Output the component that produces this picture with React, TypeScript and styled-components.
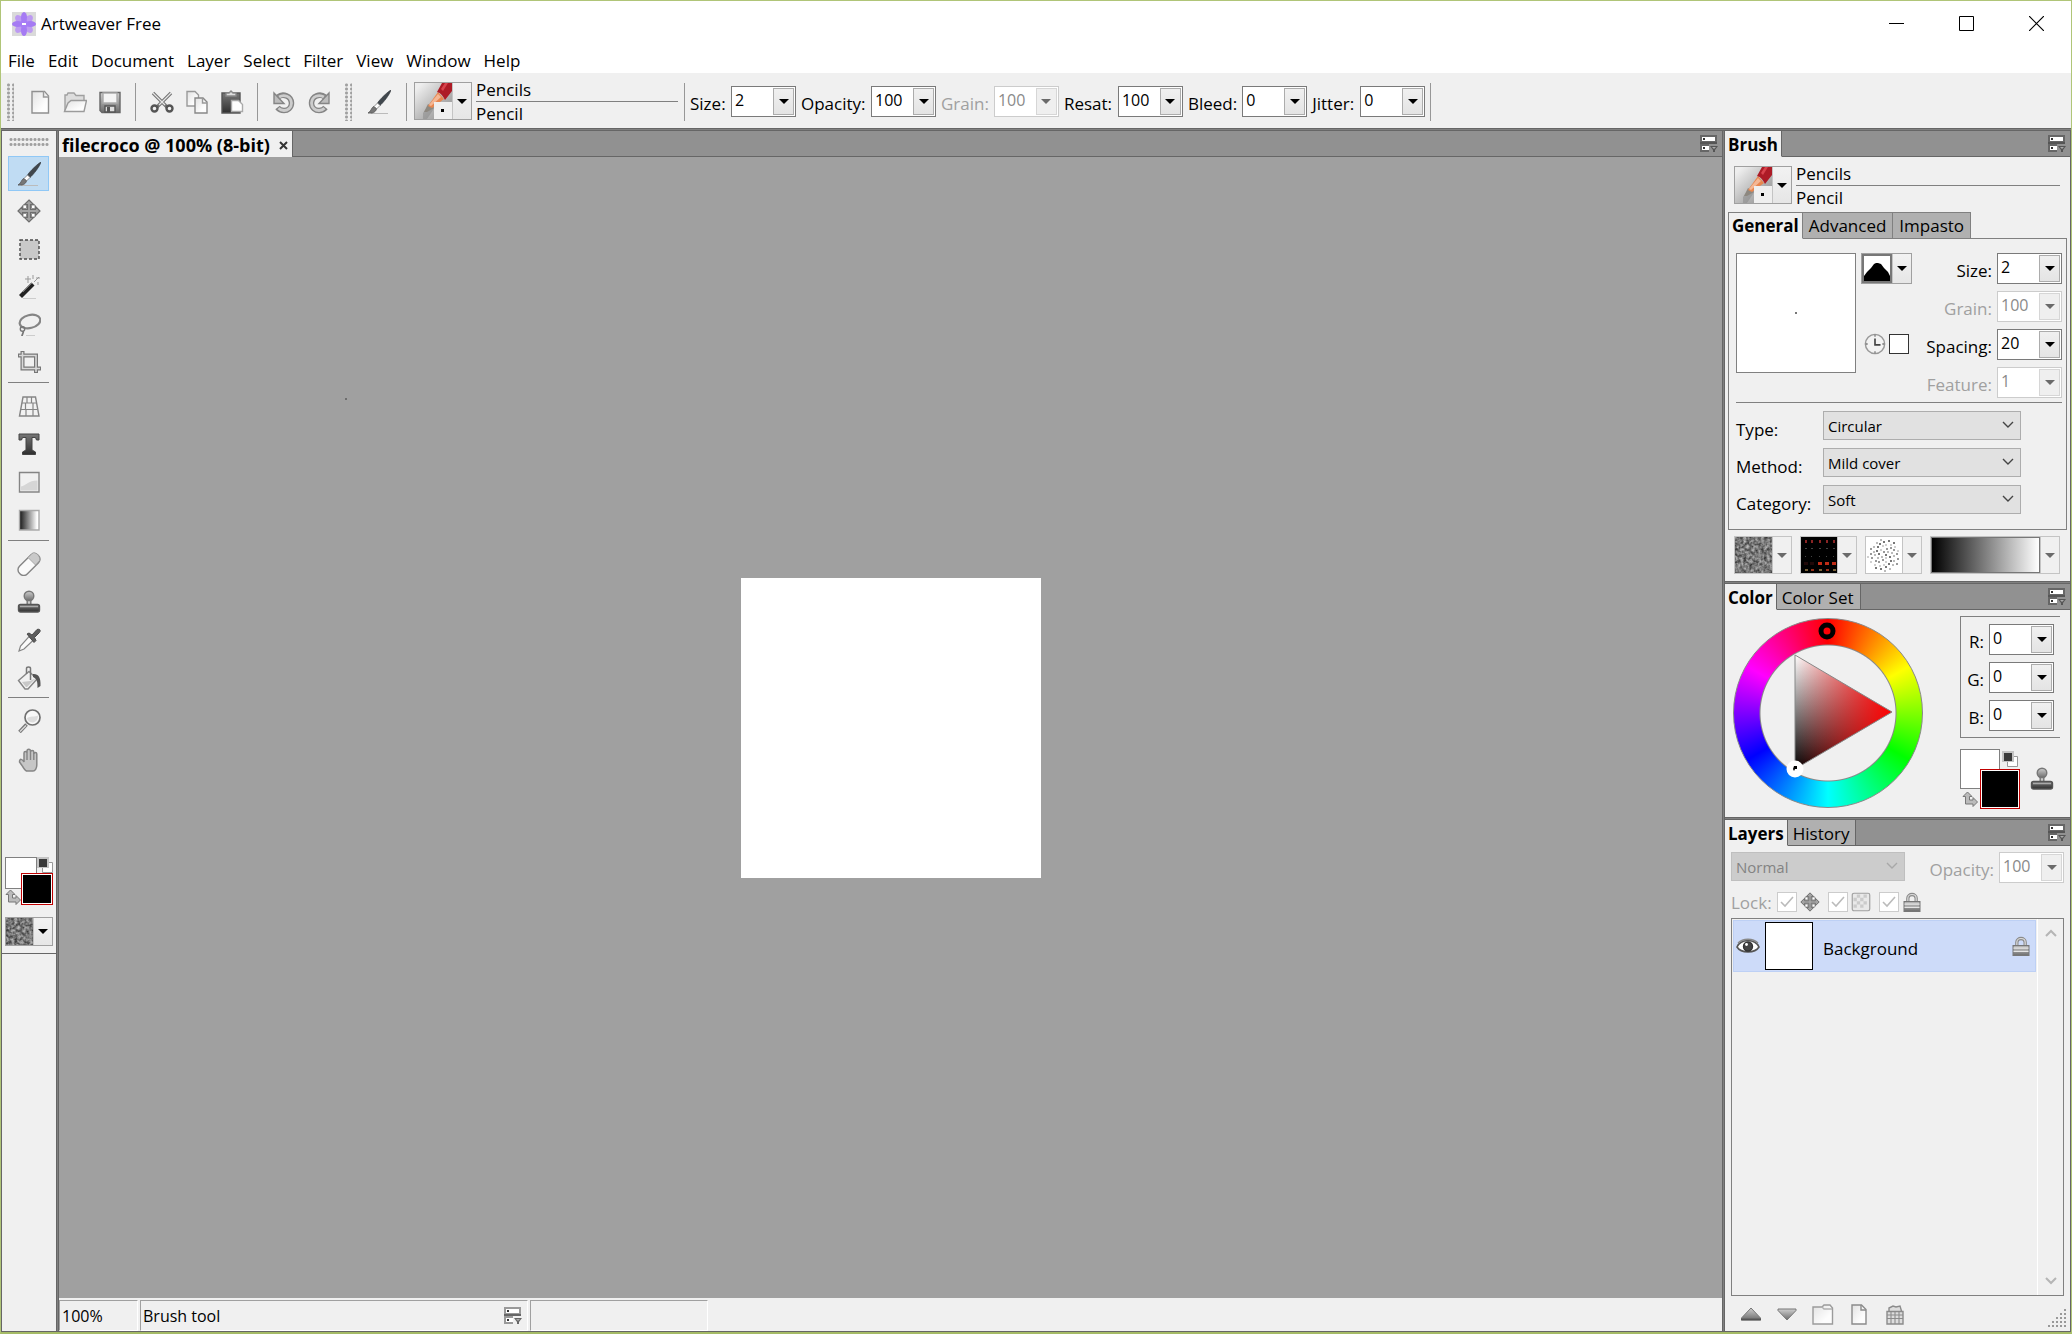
import React, { useId } from 'react';
import styled, { createGlobalStyle, css } from 'styled-components';

const color = {
  face: '#f0f0f0',
  canvas: '#a0a0a0',
  bar: '#919191',
  tab: '#b0b0b0',
  edge: '#666666',
  line: '#808080',
  soft: '#adadad',
  dim: '#a0a0a0',
};

const GlobalStyle = createGlobalStyle`
  *, *::before, *::after { box-sizing: border-box; }
  body { margin: 0; }
  body, button, input, select {
    font-family: 'Open Sans', 'Noto Sans', sans-serif;
    font-size: 17px;
    line-height: 24px;
    color: #000;
  }
  button { padding: 0; border: 0; background: none; }
  svg { display: block; }
`;

/* ---------- frame ---------- */

const Window = styled.div`
  display: flex;
  flex-direction: column;
  height: 100vh;
  min-height: 1000px;
  background: ${color.face};
  border: 1px solid #b0c578;
  border-bottom-width: 2px;
  border-bottom-color: #a5bb66;
`;

const TitleBar = styled.header`
  display: flex;
  align-items: center;
  height: 47px;
  padding: 0 0 2px 11px;
  background: #fff;
`;

const Title = styled.h1`
  margin: 0;
  padding-left: 5px;
  flex: 1;
  font-size: 17px;
  font-weight: 400;
`;

const WindowButton = styled.button`
  width: 70px;
  height: 44px;
  display: grid;
  place-items: center;
`;

const MenuBar = styled.nav`
  display: flex;
  align-items: center;
  height: 25px;
  padding-left: 7px;
  gap: 13px;
  background: #fff;
`;

const MenuItem = styled.button`
  white-space: nowrap;
`;

const ToolBar = styled.div`
  display: flex;
  align-items: center;
  height: 55px;
  padding: 2px 5px 0;
`;

const GripV = styled.div`
  width: 8px;
  height: 38px;
  background: radial-gradient(circle, #a0a0a0 1px, transparent 2px) 0 0 / 5px 4px;
`;

const GripH = styled.div`
  height: 9px;
  margin: 0 7px;
  background: radial-gradient(circle, #a0a0a0 1px, transparent 2px) 0 0 / 4px 5px;
`;

const Separator = styled.div`
  width: 1px;
  height: 38px;
  background: #979797;
`;

const IconGroup = styled.div<{ $pad?: string }>`
  display: flex;
  gap: 11px;
  padding: ${(p) => p.$pad ?? '0 13px 0 14px'};
`;

const IconButton = styled.button`
  width: 24px;
  height: 26px;
  display: grid;
  place-items: center;
`;

const Body = styled.div`
  flex: 1;
  min-height: 0;
  display: flex;
  border: solid ${color.edge};
  border-width: 0 1px 1px;
`;

const DividerH = styled.div`
  flex: none;
  height: 3px;
  background: ${color.line};
  border: solid ${color.edge};
  border-width: 1px 0;
`;

const DividerV = styled.div`
  flex: none;
  width: 3px;
  background: ${color.line};
  border: solid ${color.edge};
  border-width: 0 1px;
`;

/* ---------- shared controls ---------- */

const NumberBox = styled.span<{ $off?: boolean }>`
  display: flex;
  width: 65px;
  height: 31px;
  padding: 1px;
  background: #fff;
  border: 1px solid ${(p) => (p.$off ? '#cccccc' : '#7a7a7a')};
`;

const NumberInput = styled.input`
  flex: 1;
  min-width: 0;
  width: 0;
  border: 0;
  outline: 0;
  padding: 0 0 3px 2px;
  font-size: 16px;
  background: transparent;
  &:disabled { color: #8a8a8a; }
`;

const DropButton = styled.button<{ $faint?: boolean }>`
  width: 21px;
  display: grid;
  place-items: center;
  border: 1px solid ${(p) => (p.$faint ? '#d6d6d6' : '#acacac')};
  background: ${(p) => (p.$faint ? '#efefef' : 'linear-gradient(#f0f0f0, #e4e4e4)')};
`;

const Arrow = styled.i<{ $grey?: boolean }>`
  border: solid transparent;
  border-width: 5px 5px 0;
  border-top-color: ${(p) => (p.$grey ? '#6a6a6a' : '#000')};
`;

const Label = styled.label<{ $off?: boolean; $w?: number }>`
  white-space: nowrap;
  padding-top: 4px;
  color: ${(p) => (p.$off ? color.dim : '#000')};
  ${(p) => p.$w && css`min-width: ${p.$w}px;`}
`;

const ChoiceLabel = styled.label`
  line-height: 20px;
  padding-top: 9px;
`;

const FieldRow = styled.div`
  display: flex;
  align-items: center;
  justify-content: flex-end;
  gap: 5px;
`;

function NumberField(p: { label: string; value: string; off?: boolean; w?: number }) {
  const id = useId();
  return (
    <FieldRow>
      <Label htmlFor={id} $off={p.off} $w={p.w}>{p.label}</Label>
      <NumberBox $off={p.off}>
        <NumberInput id={id} defaultValue={p.value} disabled={p.off} />
        <DropButton $faint={p.off} disabled={p.off} aria-label={`${p.label} slider`}>
          <Arrow $grey={p.off} />
        </DropButton>
      </NumberBox>
    </FieldRow>
  );
}

const SelectWrap = styled.span<{ $off?: boolean }>`
  position: relative;
  display: block;
  width: ${(p) => (p.$off ? 174 : 198)}px;
  color: ${(p) => (p.$off ? '#a8a8a8' : '#444')};
  svg {
    position: absolute;
    right: 7px;
    top: 10px;
    pointer-events: none;
  }
`;

const Select = styled.select`
  appearance: none;
  width: 100%;
  height: 29px;
  padding: 0 24px 0 4px;
  font-size: 15px;
  line-height: 20px;
  border: 1px solid ${color.soft};
  border-radius: 0;
  background: #e1e1e1;
  &:disabled {
    background: #cccccc;
    border-color: #bfbfbf;
    color: #838383;
    opacity: 1;
  }
`;

function Choice(p: { id: string; value: string; off?: boolean; label?: string }) {
  return (
    <SelectWrap $off={p.off}>
      <Select id={p.id} disabled={p.off} aria-label={p.label}>
        <option>{p.value}</option>
      </Select>
      <svg width="12" height="8" viewBox="0 0 12 8" fill="none" stroke="currentColor" strokeWidth="1.4">
        <path d="M1 1l5 5 5-5" />
      </svg>
    </SelectWrap>
  );
}

const Picker = styled.button<{ $h?: number; $faint?: boolean; $grow?: boolean }>`
  display: flex;
  height: ${(p) => p.$h ?? 38}px;
  ${(p) => p.$grow && 'flex: 1;'}
  border: 1px solid ${(p) => (p.$faint ? '#c4c4c4' : '#a0a0a0')};
  background: ${(p) => (p.$faint ? '#f0f0f0' : 'linear-gradient(#f2f2f2, #e6e6e6)')};
`;

const PickerArrow = styled.span`
  width: 19px;
  height: 100%;
  display: grid;
  place-items: center;
  border-left: 1px solid #c4c4c4;
`;

const Gradient = styled.span`
  flex: 1;
  height: 100%;
  border: 1px solid #777;
  background: linear-gradient(90deg, #000, #fff);
`;

/* ---------- brush identity ---------- */

const BrushInfo = styled.div`
  display: flex;
  gap: 4px;
`;

const BrushNames = styled.div<{ $w?: number }>`
  ${(p) => (p.$w ? `width: ${p.$w}px;` : 'flex: 1;')}
  line-height: 23px;
  margin: -4px 0;
`;

const BrushCategory = styled.div`
  border-bottom: 1px solid ${color.line};
`;

const PencilArt = () => {
  const id = useId();
  return (
    <svg width="37" height="36" viewBox="0 0 37 36">
      <defs>
        <linearGradient id={id} x1="0" y1="0" x2="1" y2="1">
          <stop offset="0.1" stopColor="#eeeeee" />
          <stop offset="0.6" stopColor="#b4b4b4" />
          <stop offset="1" stopColor="#8c8c8c" />
        </linearGradient>
      </defs>
      <path fill={`url(#${id})`} d="M0 0h37v36H0z" />
      <path fill="#858585" opacity=".5" d="M8 30l8-11 8-4-6 12-6 9H8z" />
      <path fill="#8d8880" d="M9 29l4-8 6 4-7 4z" />
      <path fill="#e8864f" d="M13 23l10-14 6 7-12 9z" />
      <path fill="#f4b795" d="M14 22l9-11 3 3-10 9z" />
      <path fill="#ad1b26" d="M22 9l5-9h10v8l-7 9c-2-4-4-7-8-8z" />
      <path fill="#d8434c" d="M26 6l4-6h3l-5 8z" />
      <path fill="#efefef" d="M19 19h18v17H19z" />
      <path d="M26 26h3v3h-3z" />
    </svg>
  );
};

function Brush({ nameWidth }: { nameWidth?: number }) {
  return (
    <BrushInfo>
      <Picker aria-label="Choose brush">
        <PencilArt />
        <PickerArrow><Arrow /></PickerArrow>
      </Picker>
      <BrushNames $w={nameWidth}>
        <BrushCategory>Pencils</BrushCategory>
        <div>Pencil</div>
      </BrushNames>
    </BrushInfo>
  );
}

/* ---------- icons ---------- */

type IconProps = { children: React.ReactNode; size?: number };
const Icon = ({ children, size = 24 }: IconProps) => (
  <svg width={size} height={size} viewBox="0 0 24 24" fill="none" stroke="#777" strokeWidth="1.4">
    {children}
  </svg>
);

const DefsSvg = styled.svg`
  position: absolute;
`;

const IconDefs = () => (
  <DefsSvg width="0" height="0" aria-hidden="true">
    <defs>
      <linearGradient id="paper" x1="0" y1="0" x2="1" y2="1">
        <stop offset="0" stopColor="#e2e2e2" /><stop offset=".7" stopColor="#fdfdfd" />
      </linearGradient>
      <linearGradient id="metal" x1="0" y1="0" x2="0" y2="1">
        <stop offset="0" stopColor="#cfcfcf" /><stop offset="1" stopColor="#6c6c6c" />
      </linearGradient>
      <linearGradient id="dark" x1="0" y1="0" x2="0" y2="1">
        <stop offset="0" stopColor="#777" /><stop offset="1" stopColor="#2f2f2f" />
      </linearGradient>
      <linearGradient id="ramp">
        <stop offset="0" stopColor="#161616" /><stop offset=".9" stopColor="#fff" />
      </linearGradient>
      <filter id="noise" x="0" y="0" width="100%" height="100%" colorInterpolationFilters="sRGB">
        <feTurbulence type="fractalNoise" baseFrequency="0.34" numOctaves="2" seed="4" />
        <feColorMatrix values="0.8 0 0 0 0.07  0.8 0 0 0 0.07  0.8 0 0 0 0.07  0 0 0 0 1" />
      </filter>
    </defs>
  </DefsSvg>
);

const turnPath = (
  <>
    <path stroke="#858585" strokeWidth="5.5" d="M6 7c5-4 13-1 13.500 6 0 5-4 7.500-7.500 7.500-3 0-5-1-6.500-3" />
    <path stroke="#cdcdcd" strokeWidth="2.8" d="M7 7c5-3 12-1 12.500 6 0 5-4 7.500-7.500 7.500-2 0-4-.7-5.500-2.200" />
    <path fill="#bdbdbd" stroke="#858585" d="M2 3v10.500h10z" />
  </>
);

const NewIcon = () => <Icon><path fill="url(#paper)" stroke="#8f8f8f" d="M4 1.500h12.500l4 4.500V23H4z" /><path stroke="#999" fill="#eee" d="M15.500 1.500V7h5" /></Icon>;
const OpenIcon = () => <Icon><path fill="#ddd" stroke="#a0a0a0" d="M2 21V5h2l1-2h6l2 2.500h8V10" /><path fill="url(#paper)" stroke="#9b9b9b" d="M1.500 21.500L5 13l3-2.500h15.500L21 21.500z" /></Icon>;
const SaveIcon = () => <Icon><path fill="url(#metal)" stroke="#666" d="M2 2.500h20v20H4l-2-2z" /><path fill="#f4f4f4" stroke="#aaa" d="M5 3h14v10H5z" /><path fill="#ddd" stroke="#555" d="M7 16h10v6H7z" /><path fill="#555" stroke="none" d="M9 17h3v5H9z" /></Icon>;
const CutIcon = () => <Icon><path stroke="#777" strokeWidth="3.4" d="M3 3l14 14M21 3L7 17" /><path stroke="#e6e6e6" strokeWidth="1.2" d="M3 3l12 12M21 3L9 15" /><ellipse cx="4.500" cy="18.500" rx="3" ry="3" stroke="#555" strokeWidth="2.4" /><ellipse cx="19.500" cy="18.500" rx="3" ry="3" stroke="#555" strokeWidth="2.4" /></Icon>;
const CopyIcon = () => <Icon><path fill="url(#paper)" stroke="#999" d="M2 1.500h8l3.500 3.500v11H2z" /><path fill="url(#paper)" stroke="#888" d="M10 8h8l4 4v11H10z" /><path stroke="#999" d="M17.500 8v5H22" /></Icon>;
const PasteIcon = () => <Icon><path fill="url(#dark)" stroke="#555" d="M2 3h18v20H2z" /><path fill="#ddd" stroke="#888" d="M6 6V3h3l2-2 2 2h3v3z" /><path fill="#fff" stroke="#aaa" d="M11.500 10.500h7l4 4v7h-11z" /></Icon>;
const UndoIcon = () => <Icon>{turnPath}</Icon>;
const RedoIcon = () => <Icon><g transform="matrix(-1 0 0 1 24 0)">{turnPath}</g></Icon>;
const BrushIcon = () => <Icon><path stroke="#bbb" strokeWidth="1" d="M4 23.500h17" /><path fill="#40474d" stroke="#30363b" strokeWidth=".6" d="M24 0c-3 1.500-11 9-13.500 13l2.500 2.500C16 13 22.500 5 24 0z" /><path fill="#fff" stroke="#777" strokeWidth=".8" d="M10.500 13L7 16.500 9.500 19l3.500-3.500z" /><path fill="#777" stroke="#555" strokeWidth=".8" d="M7 16.500c-3 1-2 4-6 6.500 4 .5 7.500-.5 8.500-4z" /></Icon>;
const MoveIcon = ({ size }: { size?: number }) => <Icon size={size}><path fill="#a4a4a4" stroke="#6e6e6e" strokeWidth="1.2" d="M12 1l4.500 4.500h-3v5h5v-3L23 12l-4.500 4.500v-3h-5v5h3L12 23l-4.500-4.500h3v-5h-5v3L1 12l4.500-4.500v3h5v-5h-3z" /><path fill="#fff" stroke="#777" strokeWidth=".8" d="M6 6h3.500v3.500H6zM14.500 6H18v3.500h-3.500zM6 14.500h3.500V18H6zM14.500 14.500H18V18h-3.500z" /></Icon>;
const MarqueeIcon = () => <Icon><path fill="#c9c9c9" stroke="#4a4a4a" strokeDasharray="3 2" d="M3 3h19v19H3z" /></Icon>;
const WandIcon = () => <Icon><path stroke="#222" strokeWidth="4.2" d="M3.500 21.500L16 9" /><path stroke="#777" strokeWidth="1" d="M6 17l9-9" /><path stroke="#999" strokeWidth="1" d="M17 7l5-5M11 1v7M8 4h6M19 3h4M21 7v3M16 0v4" /><path stroke="#ccc" strokeWidth="1" d="M6 23.500h13" /></Icon>;
const LassoIcon = () => <Icon><ellipse cx="13" cy="8.500" rx="10.500" ry="6.500" transform="rotate(-14 13 8.500)" stroke="#858585" strokeWidth="2.2" /><circle cx="5.500" cy="16" r="2.200" stroke="#777" /><path stroke="#777" strokeWidth="1.8" d="M6 18c1 2-1 3-1 5" /><path stroke="#ccc" strokeWidth="1" d="M9 22.500h9" /></Icon>;
const CropIcon = () => <Icon><path stroke="#777" strokeWidth="4" d="M5.500 1v17.500H24M1 5.500h18V23" /><path stroke="#d8d8d8" strokeWidth="1.6" d="M5.500 2v16.500H23M2 5.500h17V22" /></Icon>;
const MeshIcon = () => <Icon><path fill="#f2f2f2" stroke="#858585" d="M6 3h12.500l3.500 19H2.500z" /><path stroke="#858585" strokeWidth="1.2" d="M5 9h14.500M3.500 15.500h17M10 3v6M14.500 3v6M8.500 9v6.500M16 9v6.500M9 15.500V22M16 15.500V22" /></Icon>;
const TextIcon = () => <Icon><path fill="url(#dark)" stroke="#444" strokeWidth="1" d="M2 2h20v6h-2.500L18.500 5.500H15V18l3.500 2v2.500h-13V20L9 18V5.500H5.500L4.500 8H2z" /></Icon>;
const ShapeIcon = () => <Icon><path fill="#f1f1f1" stroke="#858585" d="M2.500 2.500h19.500V22H2.500z" /><path fill="#d6d6d6" stroke="none" d="M4 20.500v-4c5-1 7-6 16.500-6v10z" /></Icon>;
const GradIcon = () => <Icon><path fill="url(#ramp)" stroke="#aaa" d="M2.500 2.500h19.500V22H2.500z" /></Icon>;
const EraserIcon = () => <Icon><rect x="-1" y="7" width="26" height="11" rx="5" transform="rotate(-45 12 12.500)" fill="#fafafa" stroke="#858585" /><path fill="#c9c9c9" stroke="#999" strokeWidth=".8" d="M11 5.500l4-4c3-3 9 3 7.500 7l-4 4.500z" /></Icon>;
const StampIcon = () => <Icon><circle cx="12" cy="6" r="4.800" fill="url(#metal)" stroke="#777" /><path fill="#ccc" stroke="#777" d="M10.200 10.500h3.600V15h-3.600z" /><rect x="1.500" y="14.500" width="21" height="7.500" rx="2" fill="url(#dark)" stroke="#555" /><path stroke="#aaa" strokeWidth="1.5" d="M3 16.500h18" /></Icon>;
const DropperIcon = () => <Icon><path fill="#fafafa" stroke="#858585" strokeWidth="1.2" d="M12 8.500l4 4-9 8.500-5 2 1.500-5z" /><path fill="#5c5c5c" stroke="#4a4a4a" strokeWidth="1" d="M10 6l2-1 3 2 5-5.500c3-1 4 1 2.500 3L17.500 9.500l1.500 3-2 2z" /></Icon>;
const BucketIcon = () => <Icon><path fill="#f1f1f1" stroke="#858585" d="M1.500 14.500L12 5.500l8 7.500-9 10H8z" /><path fill="#c8c8c8" stroke="none" d="M9 21l-4-5 8-1 6-3-9 9z" /><path stroke="#777" strokeWidth="1.5" d="M9.500 8V2.500c0-2 4-2 4 0V14" /><path fill="#555" stroke="none" d="M16 8c5-.5 8 3 7.500 12l-3 2c0-5 0-9-4.500-11z" /></Icon>;
const ZoomIcon = () => <Icon><path stroke="#777" strokeWidth="3.6" d="M2.500 23l7-7.500" /><path stroke="#ddd" strokeWidth="1.2" d="M3 22.500l6-6" /><circle cx="15.500" cy="8.500" r="7.500" fill="#f8f8f8" stroke="#707070" strokeWidth="1.7" /><path fill="#ddd" stroke="none" d="M10 9c3-2 8-1 11-2.500 0 5-3 7-5.500 7S10.500 12 10 9z" /></Icon>;
const HandIcon = () => <Icon><path fill="#c6c6c6" stroke="#858585" strokeWidth="1.5" d="M7 14V5c0-2 3-2 3 0V3c0-2.500 3.500-2.500 3.500 0v1c0-2 3.300-2 3.300 0v2c0-2 3-2 3 0v11c0 3-1.500 6-3.800 6H10.500c-3 0-3.500-3-5.500-5.500L2.500 14c0-4 3-3 4.500 0z" /><path stroke="#858585" d="M10 5v7M13.500 4v8M16.800 5v7" /></Icon>;
const LockIcon = ({ size }: { size?: number }) => <Icon size={size}><path stroke="#8b8b8b" strokeWidth="4" d="M7 12V7.500c0-6 10-6 10 0V12" /><path stroke="#ddd" strokeWidth="1.4" d="M7 12V7.500c0-6 10-6 10 0V12" /><path fill="url(#metal)" stroke="#777" d="M2.500 11.500h19v12h-19z" /><path stroke="#e4e4e4" strokeWidth="1.6" d="M3 14.500h18M3 18.500h18" /></Icon>;
const CheckerIcon = ({ size }: { size?: number }) => <Icon size={size}><rect x="1.500" y="1.500" width="21" height="21" rx="2" fill="#e9e9e9" stroke="#a0a0a0" /><path fill="#cbcbcb" stroke="none" d="M7 3h4v4H7zM15 3h4v4h-4zM3 7h4v4H3zM11 7h4v4h-4zM7 11h4v4H7zM15 11h4v4h-4zM11 15h4v4h-4zM3 15h4v4H3z" /></Icon>;
const ClockIcon = () => <Icon size={22}><circle cx="12" cy="12" r="10.500" fill="#f3f3f3" stroke="#999" strokeWidth="1.6" /><path stroke="#444" strokeWidth="1.8" d="M12 6v7h6" /><path stroke="#777" d="M12 2v2M12 20v2M2 12h2M20 12h2" /></Icon>;
const EyeIcon = () => <Icon><path fill="#fff" stroke="#555" strokeWidth="1.6" d="M1 13C5 4.500 19 4.500 23 13c-4 6.500-18 6.500-22 0z" /><path stroke="#888" d="M2 9C7 4 17 4 22 9" /><circle cx="12" cy="12.500" r="4.500" fill="#444" stroke="#333" /><circle cx="10.500" cy="10.500" r="1.400" fill="#fff" stroke="none" /></Icon>;
const UpIcon = () => <Icon><path fill="url(#metal)" stroke="#777" strokeWidth="1" d="M12 6l9.500 10v2h-19v-2z" /><path stroke="#555" strokeWidth="1.8" d="M2 17.500h20" /></Icon>;
const DownIcon = () => <Icon><path fill="url(#metal)" stroke="#777" strokeWidth="1" d="M3 7h18v1.500L12 18 3 8.500z" /></Icon>;
const FolderIcon = () => <Icon><path fill="url(#paper)" stroke="#9b9b9b" d="M2 5h9l2-2h6l2.500 3v16H2z" /><path stroke="#b0b0b0" d="M11 5l2 2h8" /></Icon>;
const PageIcon = () => <Icon><path fill="url(#paper)" stroke="#8b8b8b" d="M5 3h9.500L19 7.500V22H5z" /><path stroke="#8b8b8b" d="M14 3v5h5" /></Icon>;
const TrashIcon = () => <Icon><path fill="#ddd" stroke="#8b8b8b" d="M4 9.500h16V22H4zM6 9V6l4-2 3 1 4-1 1.500 5" /><path stroke="#8b8b8b" strokeWidth="1.1" d="M4 13h16M4 16.500h16M8 9.500V22M12 9.500V22M16 9.500V22" /></Icon>;

const PanelMenuIcon = ({ light }: { light?: boolean }) => (
  <svg width="18" height="18" viewBox="0 0 18 18">
    <path fill={light ? '#999' : '#666'} d="M0 0h17v8H0zM0 8h9v9H0z" />
    <path fill="#fff" d="M2 2h13v4H2zM2 11h7v4H2z" />
    <path fill="#333" d="M3 3h2v2H3zM3 12h2v2H3z" />
    <path fill={light ? '#666' : '#555'} d="M0 7h17v2H0zM10 11h8l-3 4v2h-2v-2z" />
    <path fill="#aaa" d="M12 12h4l-2 2z" />
  </svg>
);

const FlowerIcon = () => (
  <svg width="24" height="24" viewBox="0 0 24 24">
    <path fill="#dadada" d="M0 0h24v24H0z" />
    <g fill="#bd9af2">
      {[45, 135, 225, 315].map((a) => <ellipse key={a} cx="12" cy="5.500" rx="3.500" ry="5" transform={`rotate(${a} 12 12)`} />)}
    </g>
    <g fill="#a57bf3">
      {[0, 90, 180, 270].map((a) => <ellipse key={a} cx="12" cy="5.500" rx="3" ry="5.500" transform={`rotate(${a} 12 12)`} />)}
    </g>
    <circle cx="12" cy="12" r="4" fill="#a77df5" />
    <path fill="#fff" d="M10 11h4v2h-4z" />
  </svg>
);

/* ---------- tool box ---------- */

const ToolBox = styled.aside`
  width: 54px;
  flex: none;
  padding-top: 6px;
`;

const ToolGroup = styled.div<{ $h: number }>`
  display: grid;
  align-content: space-between;
  height: ${(p) => p.$h}px;
  margin: 5px 7px 0 6px;
  padding-bottom: 2px;
  & + & { border-top: 1px solid ${color.line}; margin-top: 0; padding-top: 5px; }
`;

const ToolButton = styled.button<{ $on?: boolean }>`
  height: 35px;
  display: grid;
  place-items: center;
  ${(p) => p.$on && css`
    background: #c0dcf3;
    border: 1px solid #90c8f6;
  `}
`;

const Tools = styled.div`
  padding-top: 5px;
`;

const groups: { h: number; tools: [string, () => React.JSX.Element][] }[] = [
  { h: 226, tools: [['Brush tool', BrushIcon], ['Move', () => <MoveIcon />], ['Marquee', MarqueeIcon], ['Magic wand', WandIcon], ['Lasso', LassoIcon], ['Crop', CropIcon]] },
  { h: 158, tools: [['Perspective', MeshIcon], ['Text', TextIcon], ['Shape', ShapeIcon], ['Gradient', GradIcon]] },
  { h: 157, tools: [['Eraser', EraserIcon], ['Stamp', StampIcon], ['Dropper', DropperIcon], ['Fill', BucketIcon]] },
  { h: 82, tools: [['Zoom', ZoomIcon], ['Hand', HandIcon]] },
];

const ToolColors = styled.div`
  padding: 78px 3px 12px;
`;

const TextureSlot = styled.div`
  padding-left: 3px;
`;

const BoxEnd = styled.hr`
  margin: 7px 0 0;
  border: 0;
  border-top: 1px solid ${color.edge};
`;

/* Two overlapping swatches with the reset and swap buttons in the free corners. */
const SwatchGrid = styled.div<{ $s: number }>`
  display: grid;
  width: ${(p) => p.$s * 3}px;
  grid-template: repeat(3, ${(p) => p.$s}px) / repeat(3, ${(p) => p.$s}px);
`;

const BackSwatch = styled.button`
  grid-area: 1 / 1 / 3 / 3;
  background: #fff;
  border: 1px solid #808080;
`;

const FrontSwatch = styled.button`
  grid-area: 2 / 2 / 4 / 4;
  z-index: 1;
  background: #000;
  border: 1px solid #c00000;
  box-shadow: inset 0 0 0 1px #fff;
`;

const Corner = styled.button<{ $at: string }>`
  grid-area: ${(p) => p.$at};
  display: grid;
  place-items: center;
`;

function Swatches({ size }: { size: number }) {
  return (
    <SwatchGrid $s={size}>
      <BackSwatch aria-label="Background color" />
      <FrontSwatch aria-label="Foreground color" />
      <Corner $at="1 / 3" aria-label="Reset colors">
        <svg width="16" height="16" viewBox="0 0 16 16">
          <path fill="#fff" stroke="#999" d="M5.500 5.500h10v10h-10z" />
          <path fill="#c4c4c4" d="M0 0h12v11H0z" />
          <path fill="#3a3a3a" d="M2 2h8v8H2z" />
        </svg>
      </Corner>
      <Corner $at="3 / 1" aria-label="Swap colors">
        <svg width="16" height="16" viewBox="0 0 16 16" fill="#bbb" stroke="#777">
          <path d="M5.500 1L10 5.500H7.500V9H11V6.500l4.500 4.500-4.500 4.500V13H3.500V5.500H1z" />
        </svg>
      </Corner>
    </SwatchGrid>
  );
}

const Grain = ({ w, h }: { w: number; h: number }) => (
  <svg width={w} height={h}>
    <rect width={w} height={h} fill="#888" filter="url(#noise)" />
  </svg>
);

const nozzleCols = [4, 10, 18, 25, 32];
const NozzleArt = () => (
  <svg width="36" height="36" viewBox="0 0 36 36">
    <path d="M0 0h36v36H0z" />
    {nozzleCols.map((x, i) => (
      <g key={x}>
        <path fill="#8a2424" d={`M${x} 3h2v3h-2z`} />
        <path fill="#444" d={`M${x} 11h2v1h-2zM${x} 19h1v1h-1z`} />
        <path fill={i > 1 ? '#c02c16' : '#200808'} d={`M${x - 1} 25h4v3h-4z`} />
        <path fill={i % 2 ? '#93301a' : '#7a6238'} d={`M${x} 32h3v2h-3z`} />
      </g>
    ))}
  </svg>
);

const specks = Array.from({ length: 54 }, (_, i) => {
  const r = 16 * Math.sqrt((i + 0.5) / 54);
  const a = i * 2.4;
  return { x: Math.round(17 + r * Math.cos(a)), y: Math.round(17 + r * Math.sin(a)), c: ['#777', '#bbb', '#999', '#d0d0d0'][i % 4] };
});
const SpeckArt = () => (
  <svg width="36" height="36" viewBox="0 0 36 36">
    <path fill="#fff" d="M0 0h36v36H0z" />
    {specks.map((s, i) => <rect key={i} x={s.x} y={s.y} width="2" height="2" fill={s.c} />)}
  </svg>
);

/* ---------- document ---------- */

const Workspace = styled.main`
  flex: 1;
  min-width: 0;
  display: flex;
  flex-direction: column;
`;

const TabStrip = styled.div`
  display: flex;
  flex: none;
  height: 26px;
  background: ${color.bar};
  box-shadow: inset 0 -1px ${color.edge};
`;

const Tab = styled.button<{ $on?: boolean }>`
  padding: 2px 6px 0 5px;
  white-space: nowrap;
  line-height: 23px;
  background: ${color.tab};
  border-right: 1px solid ${color.edge};
  border-bottom: 1px solid ${color.edge};
  ${(p) => p.$on && css`
    padding: 2px 3px 0;
    font-weight: 700;
    background: ${color.face};
    border-bottom-color: ${color.face};
  `}
`;

const DocTab = styled.div`
  display: flex;
  align-items: center;
  gap: 9px;
  padding: 2px 4px 0 3px;
  font-size: 18px;
  font-weight: 700;
  background: ${color.face};
  border-right: 1px solid ${color.edge};
`;

const StripMenu = styled.button`
  margin: 0 4px 0 auto;
`;

const Artboard = styled.div`
  position: relative;
  flex: 1;
  display: grid;
  place-items: center;
  background: ${color.canvas};
`;

const Page = styled.div`
  width: 300px;
  height: 300px;
  background: #fff;
`;

const BrushCursor = styled.span`
  position: absolute;
  left: 286px;
  top: 241px;
  width: 2px;
  height: 2px;
  background: #6e6e6e;
`;

const StatusBar = styled.footer`
  display: flex;
  height: 33px;
  padding-top: 2px;
  gap: 2px;
`;

const StatusCell = styled.div<{ $w: number }>`
  width: ${(p) => p.$w}px;
  display: flex;
  align-items: center;
  justify-content: space-between;
  padding: 0 5px 0 2px;
  font-size: 16px;
  border: 1px solid #fff;
  border-top-color: #a0a0a0;
  border-left-color: #a0a0a0;
`;

/* ---------- docked panels ---------- */

const Dock = styled.aside`
  width: 345px;
  flex: none;
  display: flex;
  flex-direction: column;
`;

const BrushPanel = styled.section`
  flex: none;
  padding: 9px 3px 7px;
`;

const BrushHead = styled.div`
  padding: 0 7px 7px 6px;
`;

const InnerTabs = styled.div`
  display: flex;
  border-left: 1px solid ${color.line};
`;

const InnerTab = styled.button<{ $on?: boolean }>`
  height: 27px;
  line-height: 24px;
  padding: 0 6px;
  border: 1px solid ${color.line};
  border-left: 0;
  background: ${color.tab};
  margin-bottom: -1px;
  z-index: 1;
  ${(p) => p.$on && css`
    font-weight: 700;
    padding: 0 3px;
    background: ${color.face};
    border-bottom-color: ${color.face};
  `}
`;

const TabPage = styled.div`
  height: 292px;
  padding: 14px 4px 0 7px;
  border: 1px solid ${color.line};
`;

const BrushSettings = styled.div`
  display: flex;
  padding-bottom: 4px;
  border-bottom: 1px solid ${color.line};
`;

const Preview = styled.div`
  width: 120px;
  height: 120px;
  display: grid;
  place-items: center;
  background: #fff;
  border: 1px solid ${color.line};
  &::after { content: ''; width: 2px; height: 2px; background: #777; }
`;

const TipColumn = styled.div`
  display: flex;
  flex-direction: column;
  align-items: center;
  justify-content: space-between;
  height: 102px;
  margin-left: 5px;
`;

const Inline = styled.div<{ $gap: number }>`
  display: flex;
  align-items: center;
  gap: ${(p) => p.$gap}px;
`;

const NumberColumn = styled.div`
  flex: 1;
  display: flex;
  flex-direction: column;
  gap: 7px;
`;

const ChoiceGrid = styled.div`
  display: grid;
  grid-template-columns: 87px auto;
  justify-content: start;
  row-gap: 8px;
  padding-top: 8px;
`;

const CheckBox = styled.input`
  appearance: none;
  flex: none;
  display: block;
  margin: 0;
  width: 20px;
  height: 20px;
  background: #fff;
  border: 1px solid #333;
  &:disabled { border-color: #ccc; }
`;

const Tick = styled.span`
  position: relative;
  display: block;
  svg { position: absolute; left: 3px; top: 4px; pointer-events: none; }
`;

const MediaRow = styled.div`
  display: flex;
  gap: 8px;
  padding: 6px 7px 0 6px;
`;

const ColorPanel = styled.section`
  flex: none;
  display: flex;
  justify-content: space-between;
  height: 207px;
  padding: 6px 10px 7px 8px;
`;

const Wheel = styled.div`
  position: relative;
  width: 190px;
  height: 190px;
  margin-top: 2px;
  border-radius: 50%;
  border: 1px solid #888;
  background:
    radial-gradient(circle, ${color.face} 67px, #888 68px, transparent 69px),
    conic-gradient(#f00, #ff0, #0f0, #0ff, #00f, #f0f, #f00);
  svg { position: absolute; left: -1px; top: -1px; }
`;

const ColorSide = styled.div`
  width: 100px;
  display: flex;
  flex-direction: column;
  gap: 11px;
`;

const RgbBox = styled.div`
  display: flex;
  flex-direction: column;
  gap: 7px;
  padding: 7px 6px 6px 0;
  border: 1px solid ${color.line};
  border-right: 0;
`;

const LayersPanel = styled.section`
  flex: 1;
  min-height: 0;
  display: flex;
  flex-direction: column;
  padding: 6px 6px 0;
`;

const LayerTop = styled.div`
  display: flex;
  justify-content: space-between;
`;

const LockRow = styled.div`
  display: flex;
  align-items: center;
  gap: 5px;
  height: 35px;
  padding-top: 2px;
`;

const LockTitle = styled.span`
  padding-top: 3px;
  color: ${color.dim};
`;

const LayerList = styled.div`
  flex: 1;
  min-height: 0;
  display: flex;
  justify-content: space-between;
  border: 1px solid ${color.line};
`;

const LayerRow = styled.div`
  flex: 1;
  display: flex;
  align-items: center;
  height: 52px;
  margin: 1px;
  padding: 0 4px 0 2px;
  background: #cddbf9;
  border: 1px solid #bdd0f5;
`;

const LayerThumb = styled.span`
  width: 48px;
  height: 48px;
  margin: 0 10px 0 5px;
  background: #fff;
  border: 1px solid #000;
`;

const LayerName = styled.span`
  flex: 1;
  padding-top: 5px;
`;

const ScrollTrack = styled.div`
  width: 26px;
  display: flex;
  flex-direction: column;
  justify-content: space-between;
  align-items: center;
  padding: 10px 0;
  border-left: 1px solid #fff;
`;

const LayerActions = styled.div`
  flex: none;
  display: flex;
  justify-content: space-between;
  height: 35px;
  padding-top: 5px;
`;

const ActionIcons = styled.div`
  display: flex;
  gap: 12px;
  padding-left: 8px;
`;

const SizeGrip = styled.svg`
  align-self: flex-end;
  margin: 0 -4px 2px 0;
`;

function PanelTabs({ active, others = [] }: { active: string; others?: string[] }) {
  return (
    <TabStrip>
      <Tab $on>{active}</Tab>
      {others.map((t) => <Tab key={t}>{t}</Tab>)}
      <StripMenu aria-label={`${active} menu`}><PanelMenuIcon /></StripMenu>
    </TabStrip>
  );
}

function LockOption({ label, children }: { label: string; children: React.ReactNode }) {
  return (
    <Inline $gap={3}>
      <Tick>
        <CheckBox type="checkbox" aria-label={label} defaultChecked disabled />
        <svg width="14" height="12" viewBox="0 0 14 12" fill="none" stroke="#bbb" strokeWidth="1.6"><path d="M1 6l4 4 8-9" /></svg>
      </Tick>
      {children}
    </Inline>
  );
}

const Chevron = ({ up }: { up?: boolean }) => (
  <svg width="12" height="8" viewBox="0 0 12 8" fill="none" stroke="#b5b5b5" strokeWidth="2">
    <path d={up ? 'M1 7l5-5 5 5' : 'M1 1l5 5 5-5'} />
  </svg>
);

const menus = ['File', 'Edit', 'Document', 'Layer', 'Select', 'Filter', 'View', 'Window', 'Help'];
const choices = [['type', 'Type:', 'Circular'], ['method', 'Method:', 'Mild cover'], ['category', 'Category:', 'Soft']];

export default function App() {
  return (
    <>
      <GlobalStyle />
      <IconDefs />
      <Window>
        <TitleBar>
          <FlowerIcon />
          <Title>Artweaver Free</Title>
          <WindowButton aria-label="Minimize"><svg width="15" height="15"><path d="M0 7h15v1H0z" /></svg></WindowButton>
          <WindowButton aria-label="Maximize"><svg width="15" height="15" fill="none" stroke="#000"><path d="M.5.5h14v14H.5z" /></svg></WindowButton>
          <WindowButton aria-label="Close"><svg width="15" height="15" fill="none" stroke="#000" strokeWidth="1.2"><path d="M0 0l15 15M15 0L0 15" /></svg></WindowButton>
        </TitleBar>
        <MenuBar>
          {menus.map((m) => <MenuItem key={m}>{m}</MenuItem>)}
        </MenuBar>
        <ToolBar>
          <GripV />
          <IconGroup>
            <IconButton aria-label="New"><NewIcon /></IconButton>
            <IconButton aria-label="Open"><OpenIcon /></IconButton>
            <IconButton aria-label="Save"><SaveIcon /></IconButton>
          </IconGroup>
          <Separator />
          <IconGroup>
            <IconButton aria-label="Cut"><CutIcon /></IconButton>
            <IconButton aria-label="Copy"><CopyIcon /></IconButton>
            <IconButton aria-label="Paste"><PasteIcon /></IconButton>
          </IconGroup>
          <Separator />
          <IconGroup>
            <IconButton aria-label="Undo"><UndoIcon /></IconButton>
            <IconButton aria-label="Redo"><RedoIcon /></IconButton>
          </IconGroup>
          <GripV />
          <IconGroup $pad="0 15px">
            <IconButton aria-label="Brush"><BrushIcon /></IconButton>
          </IconGroup>
          <Separator />
          <IconGroup $pad="0 6px 0 7px"><Brush nameWidth={202} /></IconGroup>
          <Separator />
          <IconGroup $pad="0 5px">
            <Inline $gap={5}>
              <NumberField label="Size:" value="2" w={36} />
              <NumberField label="Opacity:" value="100" w={65} />
              <NumberField label="Grain:" value="100" off w={47} />
              <NumberField label="Resat:" value="100" w={49} />
              <NumberField label="Bleed:" value="0" w={49} />
              <NumberField label="Jitter:" value="0" w={43} />
            </Inline>
          </IconGroup>
          <Separator />
        </ToolBar>
        <DividerH />
        <Body>
          <ToolBox>
            <GripH />
            <Tools>
              {groups.map((g, gi) => (
                <ToolGroup key={gi} $h={g.h}>
                  {g.tools.map(([name, Glyph], i) => (
                    <ToolButton key={name} $on={gi === 0 && i === 0} aria-label={name}><Glyph /></ToolButton>
                  ))}
                </ToolGroup>
              ))}
            </Tools>
            <ToolColors><Swatches size={16} /></ToolColors>
            <TextureSlot>
              <Picker $h={29} aria-label="Texture"><Grain w={27} h={27} /><PickerArrow><Arrow /></PickerArrow></Picker>
            </TextureSlot>
            <BoxEnd />
          </ToolBox>
          <DividerV />
          <Workspace>
            <TabStrip>
              <DocTab>
                filecroco @ 100% (8-bit)
                <button aria-label="Close document">
                  <svg width="9" height="9" fill="none" stroke="#333" strokeWidth="2"><path d="M1 1l7 7M8 1L1 8" /></svg>
                </button>
              </DocTab>
              <StripMenu aria-label="Document menu"><PanelMenuIcon /></StripMenu>
            </TabStrip>
            <Artboard>
              <Page />
              <BrushCursor />
            </Artboard>
            <StatusBar>
              <StatusCell $w={79}>100%</StatusCell>
              <StatusCell $w={388}>Brush tool<PanelMenuIcon light /></StatusCell>
              <StatusCell $w={178} />
            </StatusBar>
          </Workspace>
          <DividerV />
          <Dock>
            <PanelTabs active="Brush" />
            <BrushPanel>
              <BrushHead><Brush /></BrushHead>
              <InnerTabs>
                <InnerTab $on>General</InnerTab>
                <InnerTab>Advanced</InnerTab>
                <InnerTab>Impasto</InnerTab>
              </InnerTabs>
              <TabPage>
                <BrushSettings>
                  <Preview />
                  <TipColumn>
                    <Picker $h={31} aria-label="Brush tip">
                      <svg width="30" height="29" viewBox="0 0 30 29">
                        <path fill="#fff" stroke="#777" strokeWidth="2" d="M1 1h28v27H1z" />
                        <path d="M2 27v-5l3-4 4-4 3-4 2-1h2l3 1 3 4 4 4 2 4v5z" />
                      </svg>
                      <PickerArrow><Arrow /></PickerArrow>
                    </Picker>
                    <Inline $gap={3}>
                      <ClockIcon />
                      <CheckBox type="checkbox" aria-label="Continuous spray" />
                    </Inline>
                  </TipColumn>
                  <NumberColumn>
                    <NumberField label="Size:" value="2" />
                    <NumberField label="Grain:" value="100" off />
                    <NumberField label="Spacing:" value="20" />
                    <NumberField label="Feature:" value="1" off />
                  </NumberColumn>
                </BrushSettings>
                <ChoiceGrid>
                  {choices.map(([id, label, value]) => (
                    <React.Fragment key={id}>
                      <ChoiceLabel htmlFor={id}>{label}</ChoiceLabel>
                      <Choice id={id} value={value} />
                    </React.Fragment>
                  ))}
                </ChoiceGrid>
              </TabPage>
              <MediaRow>
                <Picker $faint aria-label="Paper"><Grain w={37} h={36} /><PickerArrow><Arrow $grey /></PickerArrow></Picker>
                <Picker $faint aria-label="Nozzle"><NozzleArt /><PickerArrow><Arrow $grey /></PickerArrow></Picker>
                <Picker $faint aria-label="Pattern"><SpeckArt /><PickerArrow><Arrow $grey /></PickerArrow></Picker>
                <Picker $faint $grow aria-label="Gradient"><Gradient /><PickerArrow><Arrow $grey /></PickerArrow></Picker>
              </MediaRow>
            </BrushPanel>
            <DividerH />
            <PanelTabs active="Color" others={['Color Set']} />
            <ColorPanel>
              <Wheel>
                <svg width="190" height="190" viewBox="0 0 190 190">
                  <defs>
                    <linearGradient id="tone" x1="0" y1="0" x2="0" y2="1">
                      <stop offset="0" stopColor="#fff" /><stop offset="1" stopColor="#000" />
                    </linearGradient>
                    <linearGradient id="hue">
                      <stop offset="0" stopColor="#f00" stopOpacity="0" /><stop offset="1" stopColor="#f00" />
                    </linearGradient>
                  </defs>
                  <path fill="url(#tone)" d="M62 37l97 57-97 57z" />
                  <path fill="url(#hue)" stroke="#888" d="M62 37l97 57-97 57z" />
                  <circle cx="94" cy="13" r="6" fill="none" stroke="#000" strokeWidth="5" />
                  <circle cx="62" cy="151" r="6" fill="#fff" stroke="#fff" strokeWidth="5" />
                  <path d="M61 148h3v3h-2l-1 2-1-2z" />
                </svg>
              </Wheel>
              <ColorSide>
                <RgbBox>
                  <NumberField label="R:" value="0" w={15} />
                  <NumberField label="G:" value="0" w={15} />
                  <NumberField label="B:" value="0" w={15} />
                </RgbBox>
                <Inline $gap={10}>
                  <Swatches size={20} />
                  <IconButton aria-label="Clone color"><StampIcon /></IconButton>
                </Inline>
              </ColorSide>
            </ColorPanel>
            <DividerH />
            <PanelTabs active="Layers" others={['History']} />
            <LayersPanel>
              <LayerTop>
                <Choice id="blend" value="Normal" label="Blend mode" off />
                <NumberField label="Opacity:" value="100" off />
              </LayerTop>
              <LockRow>
                <LockTitle>Lock:</LockTitle>
                <Inline $gap={8}>
                  <LockOption label="Lock position"><MoveIcon size={20} /></LockOption>
                  <LockOption label="Lock transparency"><CheckerIcon size={20} /></LockOption>
                  <LockOption label="Lock all"><LockIcon size={20} /></LockOption>
                </Inline>
              </LockRow>
              <LayerList>
                <LayerRow>
                  <EyeIcon />
                  <LayerThumb />
                  <LayerName>Background</LayerName>
                  <LockIcon size={20} />
                </LayerRow>
                <ScrollTrack><Chevron up /><Chevron /></ScrollTrack>
              </LayerList>
              <LayerActions>
                <ActionIcons>
                  <IconButton aria-label="Move layer up"><UpIcon /></IconButton>
                  <IconButton aria-label="Move layer down"><DownIcon /></IconButton>
                  <IconButton aria-label="New group"><FolderIcon /></IconButton>
                  <IconButton aria-label="New layer"><PageIcon /></IconButton>
                  <IconButton aria-label="Delete layer"><TrashIcon /></IconButton>
                </ActionIcons>
                <SizeGrip width="20" height="20" fill="#999">
                  {[0, 1, 2, 3, 4].flatMap((r) =>
                    Array.from({ length: r + 1 }, (_, c) => (
                      <rect key={`${r}-${c}`} x={16 - c * 4} y={r * 4} width="2" height="2" />
                    )),
                  )}
                </SizeGrip>
              </LayerActions>
            </LayersPanel>
          </Dock>
        </Body>
      </Window>
    </>
  );
}
